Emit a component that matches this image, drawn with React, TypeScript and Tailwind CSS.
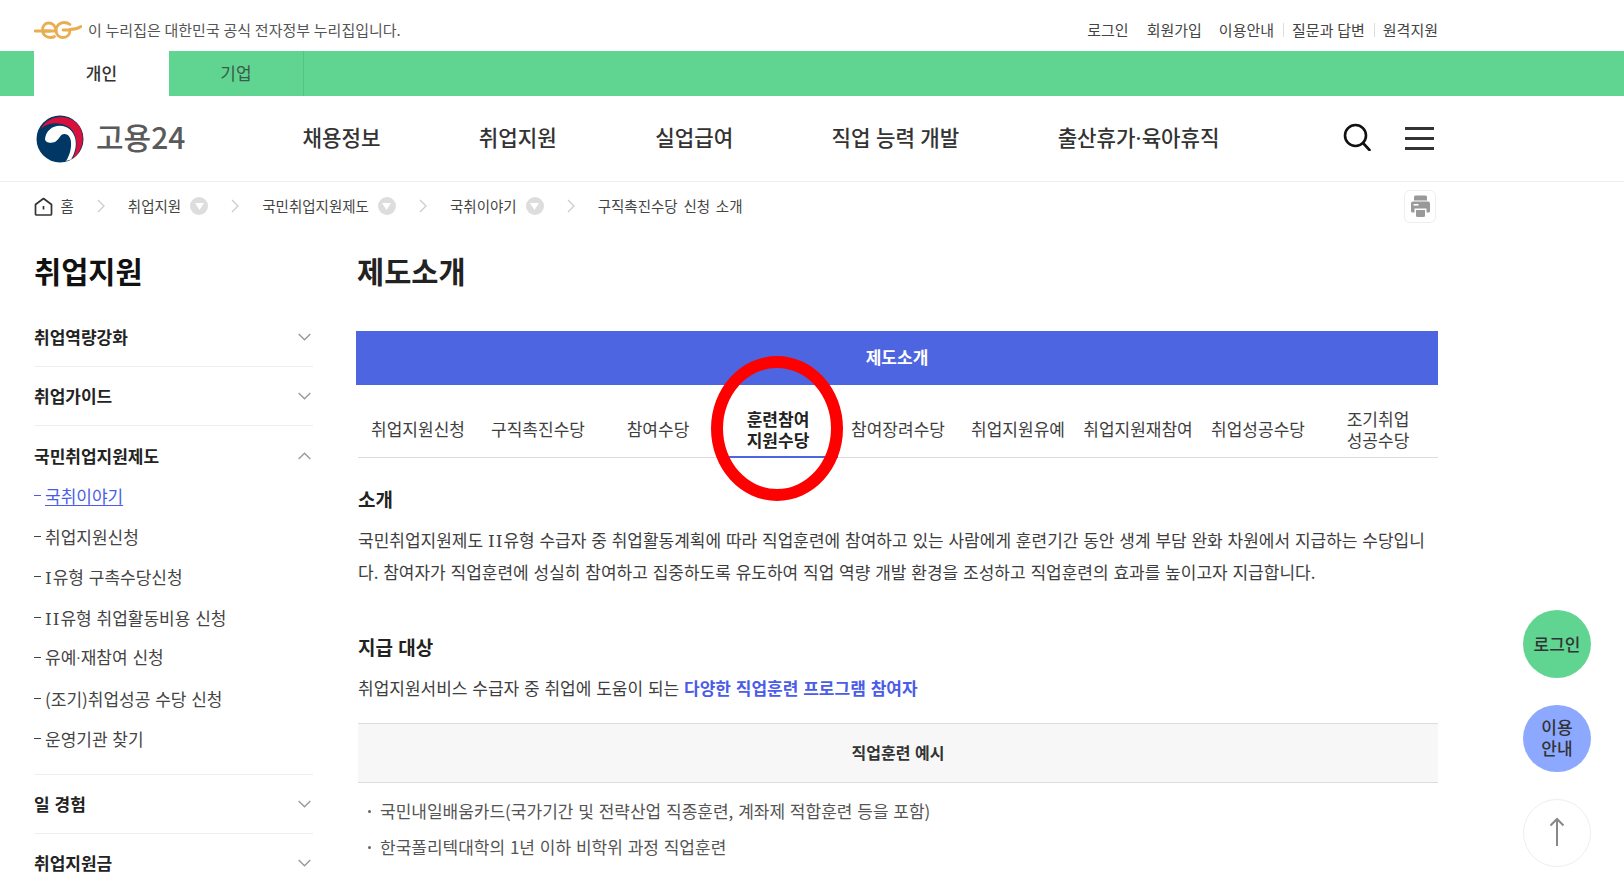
const navItems = ["채용정보", "취업지원", "실업급여", "직업 능력 개발"];

function Dot() {
  return <span className="font-['Roboto',sans-serif]">·</span>;
}

function Roman({ children }: { children: string }) {
  return <span className="font-['DejaVu_Serif',serif] leading-none tracking-[1px]">{children}</span>;
}

const subMenu = [
  <>국취이야기</>,
  <>취업지원신청</>,
  <><Roman>I</Roman>유형 구촉수당신청</>,
  <><Roman>II</Roman>유형 취업활동비용 신청</>,
  <>유예<Dot />재참여 신청</>,
  <>(조기)취업성공 수당 신청</>,
  <>운영기관 찾기</>,
];

function EgLogo() {
  return (
    <svg width="48" height="18" viewBox="0 0 48 18" fill="none" stroke="#e9ad52" strokeWidth="2.800" strokeLinecap="round">
      <path d="M1 10h15" />
      <path d="M10 10h12c0-4.500-3-8-7-8-4 0-6.500 3-6.500 7 0 4.500 3.500 7.500 8 7.500 1.500 0 3-.3 4-1" />
      <path d="M36 3.500C34.500 2.300 32.500 1.500 30 1.500c-4.500 0-8 3.500-8 8 0 4.500 3.500 7 7 7 4 0 7-3 7-7.500h-7" />
      <path d="M36 8.500c4 0 8-1 11-3" />
    </svg>
  );
}

function GovMark() {
  return (
    <svg width="48" height="48" viewBox="0 0 48 48">
      <circle cx="24" cy="24" r="23.500" fill="#003764" />
      <path d="M9 24C10 14 20 8 30 12C41 17 43 32 35 44.500L30 46C36 38 38 20 29 19C24 18.500 24 24 19 27C14 29 9 27 9 24Z" fill="#fff" />
      <path d="M5 14C10 3 26 -2 38 6C50 14 50 34 36 44.500C43 33 42 18 32 11.500C22 6 11 8 5 14Z" fill="#d8103c" />
    </svg>
  );
}

function SearchIcon() {
  return (
    <svg width="28" height="28" viewBox="0 0 28 28" fill="none" stroke="#111" strokeWidth="2.600" strokeLinecap="round" className="mb-[3px]">
      <circle cx="12.500" cy="12.500" r="10.500" />
      <path d="M20 20l6.500 7" />
    </svg>
  );
}

function HomeIcon() {
  return (
    <svg width="19" height="19" viewBox="0 0 19 19" fill="none" stroke="#333" strokeWidth="1.700" strokeLinejoin="round">
      <path d="M1.500 7.500L9.500 1.500l8 6v9.500a1 1 0 0 1-1 1h-14a1 1 0 0 1-1-1z" />
      <path d="M9.500 9v3.500" />
    </svg>
  );
}

function PrintIcon() {
  return (
    <svg width="21" height="24" viewBox="0 0 20 24" fill="#999">
      <path d="M5 1.500h10a1.500 1.500 0 0 1 1.500 1.500v3.500h-13V3A1.500 1.500 0 0 1 5 1.500z" />
      <path d="M2.500 7.500h15a2 2 0 0 1 2 2V17a1.500 1.500 0 0 1-1.500 1.500h-2v-4H4v4H2A1.500 1.500 0 0 1 .500 17V9.500a2 2 0 0 1 2-2z" />
      <path d="M5.500 16h9v5.500a1.500 1.500 0 0 1-1.500 1.500H7a1.500 1.500 0 0 1-1.500-1.500z" />
      <rect x="3" y="10" width="5" height="1.600" fill="#fff" />
    </svg>
  );
}

function Chevron({ up = false }: { up?: boolean }) {
  return (
    <svg width="13" height="8" viewBox="0 0 13 8" fill="none" stroke="#999" strokeWidth="1.400" className={up ? "rotate-180" : ""}>
      <path d="M.700 1l5.800 5.800L12.300 1" />
    </svg>
  );
}

function Crumb({ label, drop = true }: { label: React.ReactNode; drop?: boolean }) {
  return (
    <div className="flex items-center">
      <svg width="8" height="14" viewBox="0 0 8 14" fill="none" stroke="#ccc" strokeWidth="1.300" className="mx-[23px]">
        <path d="M1 1l6 6-6 6" />
      </svg>
      <span>{label}</span>
      {drop && (
        <span className="ml-[9px] flex h-[18px] w-[18px] items-center justify-center rounded-full bg-[#ddd]">
          <svg width="9" height="7" viewBox="0 0 9 7" fill="#fff">
            <path d="M0 0h9L4.500 7z" />
          </svg>
        </span>
      )}
    </div>
  );
}

function SideItem({ label }: { label: string }) {
  return (
    <div className="flex h-[59px] items-center justify-between border-b border-[#eee] pr-[2px] text-[17px] font-bold text-[#222]">
      <span>{label}</span>
      <Chevron />
    </div>
  );
}

function FloatButton({ className, children }: { className: string; children: React.ReactNode }) {
  return (
    <div className={`flex w-[68px] items-center justify-center rounded-full text-center text-[17px] leading-[21px] font-medium text-[#333] ${className}`}>
      {children}
    </div>
  );
}

export default function App() {
  return (
    <div className="relative h-[874px] w-full overflow-hidden bg-white font-['Noto_Sans_CJK_KR','Noto_Sans',sans-serif] text-[#3e3e3e] [word-spacing:1px]">
      {/* 상단 공지 */}
      <div className="flex h-[51px] items-center justify-between pt-[9px] pr-[186px] pl-[34px] text-[15px] text-[#555] [word-spacing:0.4px]">
        <div className="flex items-center gap-[6px]">
          <EgLogo />
          <span>이 누리집은 대한민국 공식 전자정부 누리집입니다.</span>
        </div>
        <div className="flex items-center text-[#444]">
          <span>로그인</span>
          <span className="ml-[18px]">회원가입</span>
          <span className="ml-[17px]">이용안내</span>
          <span className="mr-[8px] ml-[9px] h-[14px] w-px bg-[#ddd]" />
          <span>질문과 답변</span>
          <span className="mr-[8px] ml-[9px] h-[14px] w-px bg-[#ddd]" />
          <span>원격지원</span>
        </div>
      </div>

      {/* 개인 / 기업 */}
      <div className="flex h-[45px] bg-[#60d592] pl-[34px] text-[17px]">
        <div className="flex w-[135px] items-center justify-center bg-white pb-[2px] font-medium text-[#333]">개인</div>
        <div className="flex w-[135px] items-center justify-center border-r border-[#55c383] pb-[2px] text-[#3c5a48]">기업</div>
      </div>

      {/* 헤더 */}
      <header className="flex h-[86px] items-center border-b border-[#eee] pr-[190px] pl-[36px]">
        <GovMark />
        <span className="mb-[6px] ml-[12px] text-[30px] leading-none font-medium text-[#5a5a5a]">고용24</span>
        <nav className="mb-[2px] ml-[117px] flex gap-[98.400px] text-[21.200px] font-medium text-[#333] [word-spacing:0.6px]">
          {navItems.map((item) => (
            <span key={item}>{item}</span>
          ))}
          <span>출산휴가<Dot />육아휴직</span>
        </nav>
        <div className="ml-auto flex items-center gap-[34px]">
          <SearchIcon />
          <div className="flex w-[29px] flex-col gap-[7.500px]">
            <span className="h-[2.500px] bg-[#333]" />
            <span className="h-[2.500px] bg-[#333]" />
            <span className="h-[2.500px] bg-[#333]" />
          </div>
        </div>
      </header>

      {/* 브레드크럼 */}
      <div className="flex h-[48px] items-center justify-between pr-[188px] pl-[34px] text-[14.500px] text-[#444]">
        <div className="flex items-center">
          <HomeIcon />
          <span className="ml-[7.500px]">홈</span>
          <Crumb label="취업지원" />
          <Crumb label="국민취업지원제도" />
          <Crumb label="국취이야기" />
          <Crumb label={<span className="[word-spacing:2.500px]">구직촉진수당 신청 소개</span>} drop={false} />
        </div>
        <div className="flex h-[33px] w-[32px] items-center justify-center rounded-md border border-[#eee]">
          <PrintIcon />
        </div>
      </div>

      <div className="flex pr-[186px] pl-[34px]">
        {/* 사이드 메뉴 */}
        <aside className="w-[279px] shrink-0 pt-[20px]">
          <h2 className="mb-[18px] text-[29.500px] leading-[40px] font-semibold text-[#111]">취업지원</h2>
          <SideItem label="취업역량강화" />
          <SideItem label="취업가이드" />
          <div className="border-b border-[#eee] pb-[15px]">
            <div className="flex h-[49.500px] items-center justify-between pt-[10px] pr-[2px] text-[17px] font-bold text-[#222]">
              <span>국민취업지원제도</span>
              <Chevron up />
            </div>
            <ul className="text-[17px]">
              {subMenu.map((item, i) => (
                <li key={i} className={`flex h-[40.500px] items-center ${i === 0 ? "text-[#4a5ce8]" : "text-[#444]"}`}>
                  <span className="mr-[4px] inline-block h-px w-[7px] bg-current" />
                  <span className={i === 0 ? "underline underline-offset-2" : ""}>{item}</span>
                </li>
              ))}
            </ul>
          </div>
          <SideItem label="일 경험" />
          <SideItem label="취업지원금" />
        </aside>

        {/* 본문 */}
        <main className="ml-[43px] w-[1082px] pt-[20px]">
          <h2 className="ml-[1px] text-[29.500px] leading-[40px] font-semibold text-[#222]">제도소개</h2>
          <div className="mt-[41px] flex h-[54px] items-center justify-center bg-[#4d65e0] pb-[2px] text-[17px] font-semibold text-white">제도소개</div>
          <div className="ml-[2px]">
            <div className="grid h-[73px] grid-cols-9 border-b border-[#ddd] text-center text-[17px] leading-[21px]">
              <div className="flex items-center justify-center pt-[14px]">취업지원신청</div>
              <div className="flex items-center justify-center pt-[14px]">구직촉진수당</div>
              <div className="flex items-center justify-center pt-[14px]">참여수당</div>
              <div className="relative flex items-center justify-center pt-[16px] font-semibold text-[#222]">
                <span>
                  훈련참여
                  <br />
                  지원수당
                </span>
                <div className="absolute inset-x-0 -bottom-px h-[2px] bg-[#4d65e0]" />
                <div className="absolute -top-[29px] -right-[5px] -bottom-[44px] -left-[7px] rounded-[50%] border-[12.500px] border-[#ff0000]" />
              </div>
              <div className="flex items-center justify-center pt-[14px]">참여장려수당</div>
              <div className="flex items-center justify-center pt-[14px]">취업지원유예</div>
              <div className="flex items-center justify-center pt-[14px]">취업지원재참여</div>
              <div className="flex items-center justify-center pt-[14px]">취업성공수당</div>
              <div className="flex items-center justify-center pt-[16px]">
                <span>
                  조기취업
                  <br />
                  성공수당
                </span>
              </div>
            </div>

            <h3 className="mt-[26px] text-[19px] leading-[30px] font-semibold text-[#222]">소개</h3>
            <p className="mt-[10px] text-[17px] leading-[32px] break-all">
              국민취업지원제도 <Roman>II</Roman>유형 수급자 중 취업활동계획에 따라 직업훈련에 참여하고 있는 사람에게 훈련기간 동안 생계 부담 완화 차원에서 지급하는 수당입니다. 참여자가 직업훈련에 성실히 참여하고 집중하도록 유도하여 직업 역량 개발 환경을 조성하고 직업훈련의 효과를 높이고자 지급합니다.
            </p>

            <h3 className="mt-[44px] text-[19px] leading-[30px] font-semibold text-[#222]">지급 대상</h3>
            <p className="mt-[10px] text-[17px] leading-[32px]">
              취업지원서비스 수급자 중 취업에 도움이 되는 <strong className="font-semibold text-[#4a5ce8]">다양한 직업훈련 프로그램 참여자</strong>
            </p>

            <div className="mt-[19px] flex h-[60px] items-center justify-center border-y border-[#ddd] bg-[#f7f7f7] pb-[2px] text-[16px] font-semibold text-[#333]">직업훈련 예시</div>
            <ul className="mt-[10px] text-[17px] leading-[36px] text-[#555]">
              <li className="flex items-center">
                <span className="mr-[9px] ml-[10px] h-[3px] w-[3px] rounded-full bg-[#666]" />
                <span>국민내일배움카드(국가기간 및 전략산업 직종훈련, 계좌제 적합훈련 등을 포함)</span>
              </li>
              <li className="flex items-center">
                <span className="mr-[9px] ml-[10px] h-[3px] w-[3px] rounded-full bg-[#666]" />
                <span>한국폴리텍대학의 1년 이하 비학위 과정 직업훈련</span>
              </li>
            </ul>
          </div>
        </main>
      </div>

      {/* 플로팅 버튼 */}
      <div className="absolute top-[610px] right-[33px] flex flex-col gap-[27px]">
        <FloatButton className="h-[68px] bg-[#60d592] pb-[2px]">로그인</FloatButton>
        <FloatButton className="h-[67px] bg-[#8ca9ff] pb-[3px]">
          <span>
            이용
            <br />
            안내
          </span>
        </FloatButton>
        <FloatButton className="h-[68px] border border-[#eee] bg-white pb-[3px]">
          <svg width="16" height="30" viewBox="0 0 16 30" fill="none" stroke="#888" strokeWidth="2">
            <path d="M8 29V2M1.500 8.500L8 2l6.500 6.500" />
          </svg>
        </FloatButton>
      </div>
    </div>
  );
}
